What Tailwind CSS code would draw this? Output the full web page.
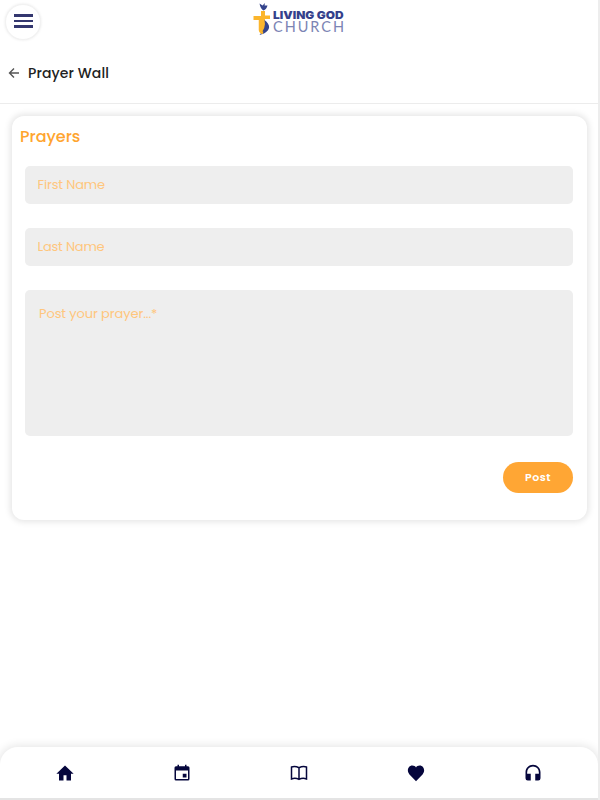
<!DOCTYPE html>
<html lang="en">
<head>
    <meta charset="UTF-8">
    <meta name="viewport" content="width=device-width, initial-scale=1.0">
    <title>Prayer Wall</title>
    <script src="https://cdn.jsdelivr.net/npm/@tailwindcss/browser@4"></script>
</head>
<body class="bg-white font-['Poppins','Inter',sans-serif]">
    <div class="h-[800px] flex flex-col overflow-hidden border-r-2 border-[#ededed]">
        <!-- Header -->
        <header class="h-11 shrink-0 grid grid-cols-3 items-center">
            <button class="size-9 ml-[5px] rounded-full bg-white border border-[#f2f2f2] shadow-[0_0_3px_#e8e8e8] flex flex-col items-center justify-center gap-[3px] pb-0.5" aria-label="Menu">
                <span class="w-[19px] h-[2.5px] bg-[#34376f]"></span>
                <span class="w-[19px] h-[2.5px] bg-[#34376f]"></span>
                <span class="w-[19px] h-[2.5px] bg-[#34376f]"></span>
            </button>
            <svg class="w-[94px] h-9 mb-2 justify-self-center" viewBox="0 0 94 36" role="img" aria-label="Living God Church">
                <path d="M7.500 3.500 L10.500 5.500 L13 3 L12.500 5.500 L15.500 5.500 Q14.500 9.500 11.500 10.500 Q8.500 9 7.500 3.500Z" fill="#34448c"/>
                <path d="M9 11 H13 V15.500 H18 V19 H13 V33 H9 V20 H1.500 V16 H9Z" fill="#fbb52c"/>
                <path d="M12.500 20 Q22 27.500 12 33.500 L7.500 35 Q14.500 28 12.500 20Z" fill="#34448c"/>
                <path d="M8 19.500 V30 Q8 32 11 33" fill="none" stroke="#fbb52c" stroke-width="2.500"/>
                <text x="21" y="19" textLength="70.500" lengthAdjust="spacingAndGlyphs" font-family="Inter" font-size="11" font-weight="900" fill="#34408c">LIVING GOD</text>
                <text x="21" y="31.500" textLength="71" font-family="Lato" font-size="14.500" fill="#7c84b4">CHURCH</text>
            </svg>
        </header>

        <!-- Page title -->
        <div class="h-[60px] shrink-0 flex items-center pl-2 pb-0.5 border-b border-[#ececec]">
            <svg class="size-3 mr-2" viewBox="0 0 12 12" fill="none" stroke="#555" stroke-width="1.4">
                <path d="M11 6H2M6 1.500L1.500 6L6 10.500"/>
            </svg>
            <h1 class="text-sm font-medium tracking-[.1px] text-[#222]">Prayer Wall</h1>
        </div>

        <!-- Prayer form -->
        <form class="mx-3 mr-[11px] mt-3 h-[404px] shrink-0 rounded-xl bg-white shadow-[0_0_6px_2px_#e6e6e6] pl-[13px] pr-[14px] flex flex-col">
            <h2 class="-ml-[5px] mt-[9px] h-6 leading-6 text-base font-medium text-[#ffa52f]">Prayers</h2>
            <input type="text" placeholder="First Name" class="mt-[17px] h-[38px] shrink-0 rounded-[5px] bg-[#eee] pl-[12.5px] text-[13px] tracking-[-.15px] placeholder:text-[#ffc67d]">
            <input type="text" placeholder="Last Name" class="mt-6 h-[38px] shrink-0 rounded-[5px] bg-[#eee] pl-[12.5px] text-[13px] tracking-[-.2px] placeholder:text-[#ffc67d]">
            <textarea placeholder="Post your prayer...*" class="mt-6 h-[146px] shrink-0 resize-none rounded-[5px] bg-[#eee] px-3.5 py-3.5 text-[13px] leading-5 tracking-[-.1px] placeholder:text-[#ffc67d]"></textarea>
            <button type="button" class="mt-[25.5px] w-[70px] h-[31px] self-end rounded-full bg-[#ffa634] text-white text-[11px] font-semibold tracking-[.5px] pt-px">Post</button>
        </form>

        <!-- Bottom navigation -->
        <nav class="mt-auto h-[53px] shrink-0 rounded-t-[18px] bg-white shadow-[0_0_8px_2px_#e8e8e8] border-b-2 border-[#e4e4e4] px-[7px] grid grid-cols-5 items-center justify-items-center text-[#05063c]">
            <svg class="size-[18px]" viewBox="0 0 24 24" fill="currentColor">
                <path d="M10 22v-7h4v7h6V13h3.500L12 2 .500 13H4v9z"/>
            </svg>
            <svg class="size-[18px]" viewBox="0 0 24 24" fill="currentColor">
                <path d="M19 3h-1V1h-2v2H8V1H6v2H4a2 2 0 0 0-2 2v15a2 2 0 0 0 2 2h16a2 2 0 0 0 2-2V5a2 2 0 0 0-2-2zm1 17H4V8.500h16zM18 13h-5v5h5z"/>
            </svg>
            <svg class="size-[18px]" viewBox="0 0 24 24" fill="none" stroke="currentColor" stroke-width="2">
                <path d="M12 5Q7 2.500 2 4v16q5-2 10 .500 5-2.500 10-.500V4q-5-1.500-10 1zM12 5v15.500"/>
            </svg>
            <svg class="size-[18px]" viewBox="0 0 24 24" fill="currentColor">
                <path d="M12 23L3 13.500C-1 8.500 2 2 7 2 9.500 2 11 3 12 4.500 13 3 14.500 2 17 2 22 2 25 8.500 21 13.500z"/>
            </svg>
            <svg class="size-[18px]" viewBox="0 0 24 24" fill="currentColor">
                <path d="M12 1C6.500 1 2 5.500 2 11v8a3 3 0 0 0 3 3h4v-9H4.200v-2a7.800 7.800 0 0 1 15.600 0v2H15v9h4a3 3 0 0 0 3-3v-8C22 5.500 17.500 1 12 1z"/>
            </svg>
        </nav>
    </div>
</body>
</html>
